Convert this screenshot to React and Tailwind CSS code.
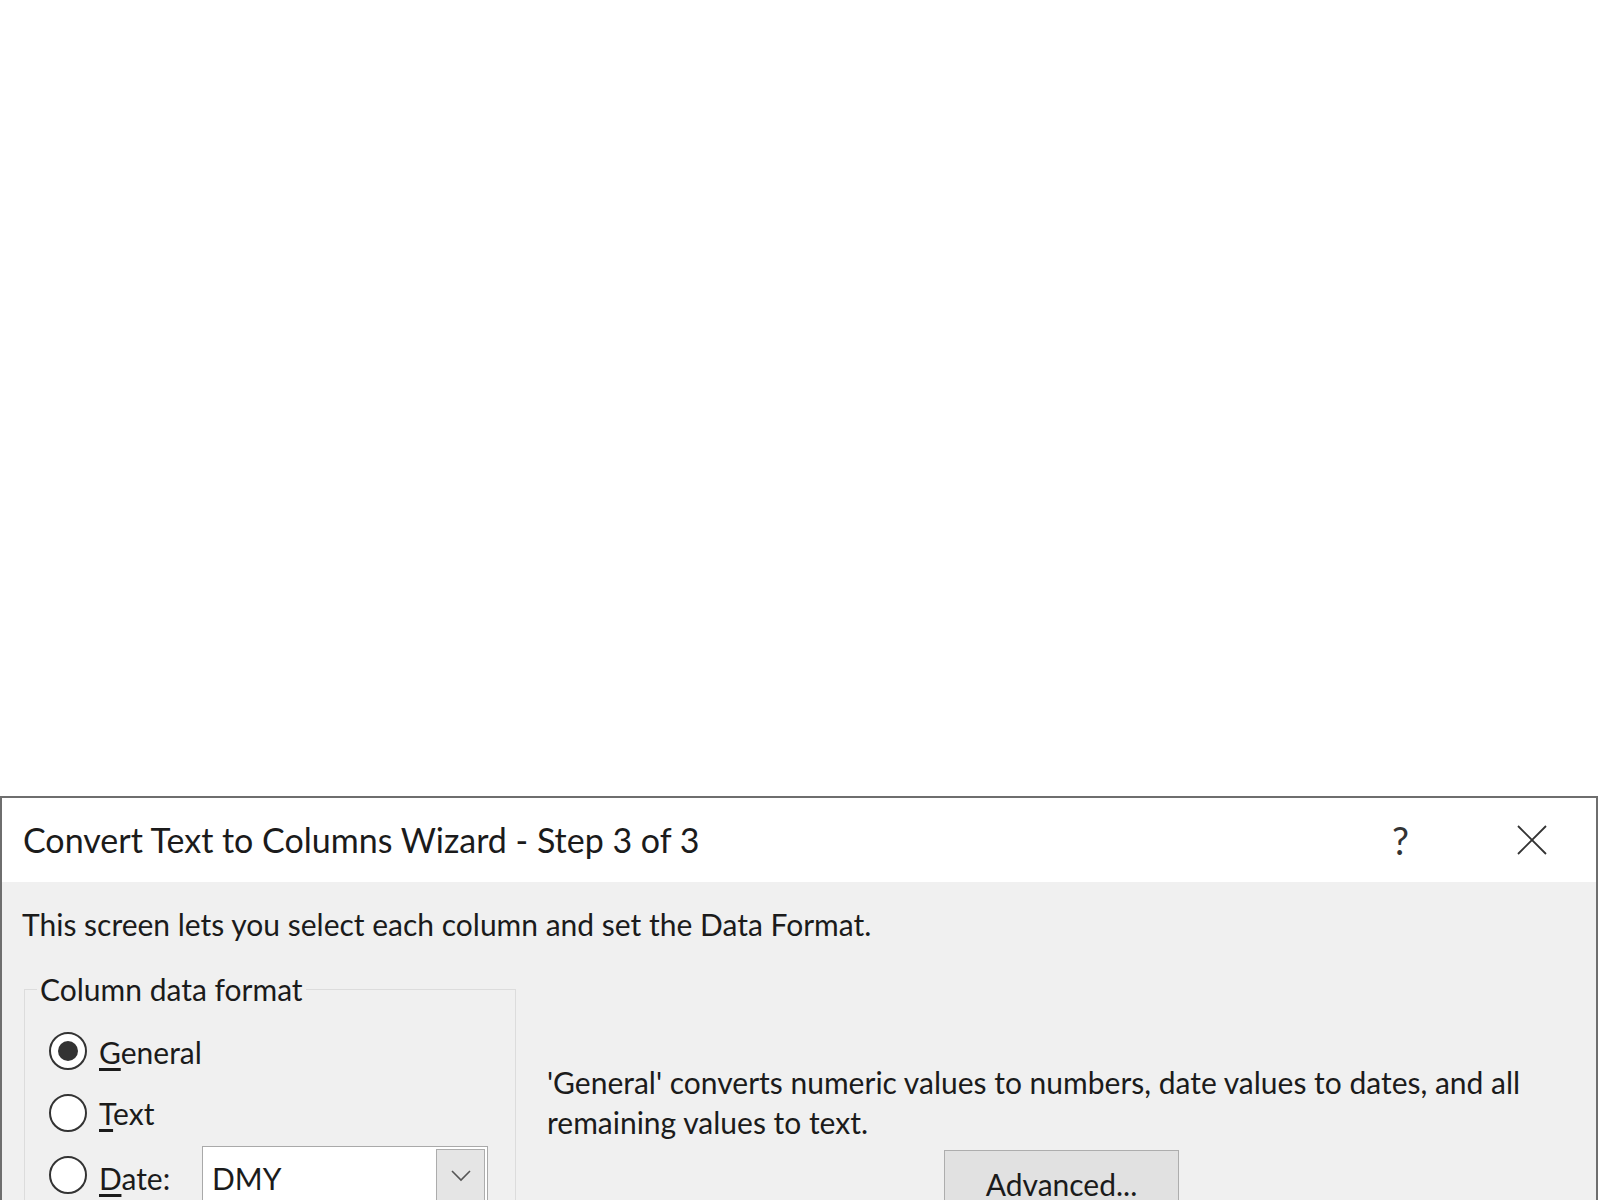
// App.jsx - Convert Text to Columns Wizard, step 3
export default function App() {
  return (
    <div className="h-screen overflow-hidden bg-white pt-[796px] font-['Lato',sans-serif] text-[#1b1b1b]">
      <div className="w-[1598px] h-[420px] border-2 border-b-0 border-[#6e6e6e] bg-[#f0f0f0]">
        {/* title bar */}
        <div className="h-[84px] bg-white flex items-center pl-[21px] pr-[49px]">
          <div className="flex-1 text-[34px] leading-none">
            Convert Text to Columns Wizard - Step 3 of 3
          </div>
          <span className="text-[38px] leading-none text-[#333]">?</span>
          <svg width="30" height="30" viewBox="0 0 30 30" className="ml-[108px]">
            <path d="M1 1 L29 29 M29 1 L1 29" stroke="#333" strokeWidth="1.8" fill="none" />
          </svg>
        </div>

        {/* body */}
        <div className="px-[20px] pt-[22px]">
          <p className="text-[30px] leading-[40px]">
            This screen lets you select each column and set the Data Format.
          </p>

          <div className="flex mt-[25px]">
            <fieldset className="ml-[2px] w-[492px] h-[300px] border border-[#dcdcdc] px-[12px] pt-[11px]">
              <legend className="px-[3px] text-[30px] leading-[40px]">Column data format</legend>

              <div className="pl-[12px]">
                <div className="h-[62px] flex items-center">
                  <span className="w-[38px] h-[38px] rounded-full border-2 border-[#333] bg-white flex items-center justify-center">
                    <span className="w-[20px] h-[20px] rounded-full bg-[#333]" />
                  </span>
                  <span className="ml-[12px] pt-[2px] text-[30px]">
                    <u className="underline-offset-4">G</u>eneral
                  </span>
                </div>
                <div className="h-[62px] flex items-center">
                  <span className="w-[38px] h-[38px] rounded-full border-2 border-[#333] bg-white" />
                  <span className="ml-[12px] text-[30px]">
                    <u className="underline-offset-4">T</u>ext
                  </span>
                </div>
                <div className="h-[62px] flex items-center">
                  <span className="w-[38px] h-[38px] rounded-full border-2 border-[#333] bg-white" />
                  <span className="ml-[12px] pt-[7px] w-[103px] text-[30px]">
                    <u className="underline-offset-4">D</u>ate:
                  </span>
                  <div className="w-[286px] h-[58px] border border-[#a9a9a9] bg-white flex">
                    <span className="flex-1 pl-[9px] pt-[7px] text-[30px] leading-[49px]">DMY</span>
                    <span className="mt-[2px] mr-[2px] w-[49px] border border-[#acacac] bg-[#e5e5e5] flex items-center justify-center">
                      <svg width="20" height="12" viewBox="0 0 20 12">
                        <path d="M1 1 L10 10 L19 1" stroke="#555" strokeWidth="1.6" fill="none" />
                      </svg>
                    </span>
                  </div>
                </div>
              </div>
            </fieldset>

            <div className="ml-[31px] mt-[93px]">
              <p className="text-[30px] leading-[40px] w-[1010px]">
                'General' converts numeric values to numbers, date values to dates, and all remaining values to text.
              </p>
              <button className="ml-[397px] mt-[8px] w-[235px] h-[68px] border border-[#adadad] bg-[#e1e1e1] text-[30px] text-[#1b1b1b] flex items-center justify-center">
                <span>
                  <u className="underline-offset-4">A</u>dvanced...
                </span>
              </button>
            </div>
          </div>
        </div>
      </div>
    </div>
  );
}
